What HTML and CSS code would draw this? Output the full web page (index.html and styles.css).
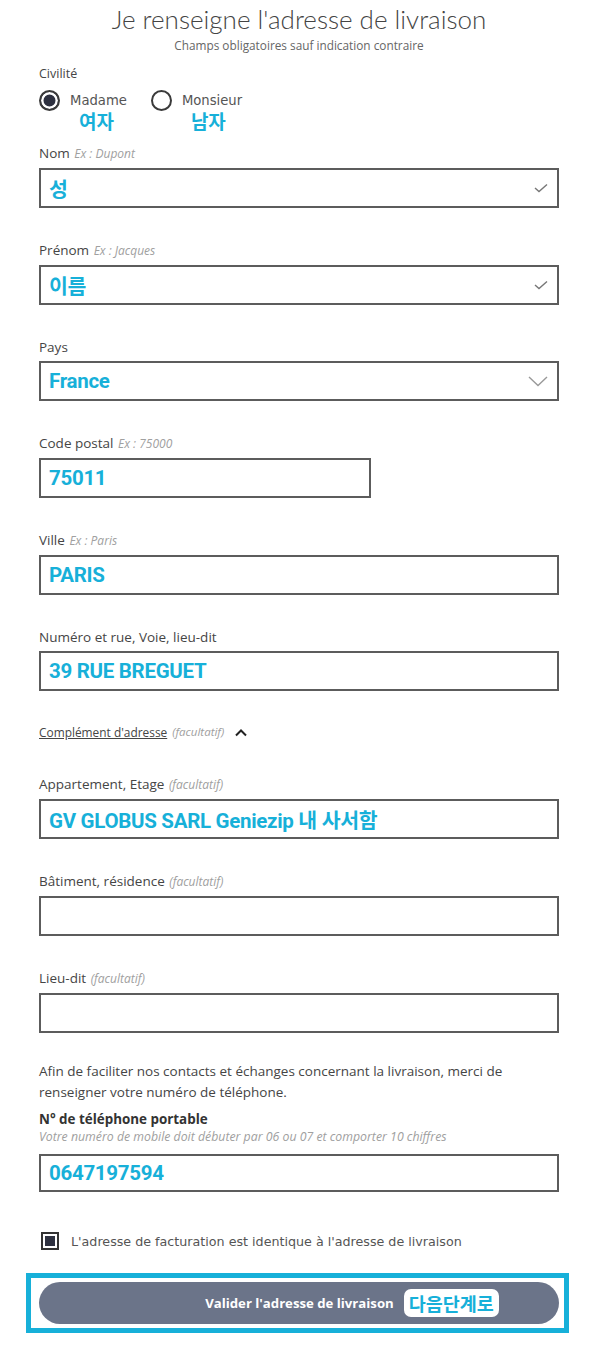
FILE: index.html
```html
<!DOCTYPE html>
<html lang="fr">
<head>
    <meta charset="UTF-8">
    <meta name="viewport" content="width=device-width, initial-scale=1.0">
    <title>Adresse de livraison</title>
    <link rel="stylesheet" href="styles.css">
</head>
<body>
    <main class="form-page">
        <header class="form-header">
            <h1>Je renseigne l'adresse de livraison</h1>
            <p class="subtitle">Champs obligatoires sauf indication contraire</p>
        </header>

        <div class="civility">
            <div class="civility-title">Civilité</div>
            <div class="radio-row">
                <div class="radio-item">
                    <span class="radio checked"></span>
                    <span class="radio-label">Madame</span>
                    <span class="note">여자</span>
                </div>
                <div class="radio-item">
                    <span class="radio"></span>
                    <span class="radio-label">Monsieur</span>
                    <span class="note">남자</span>
                </div>
            </div>
        </div>

        <div class="field">
            <label class="field-label">Nom <em>Ex : Dupont</em></label>
            <div class="input">
                <span class="value">성</span>
                <svg class="icon-check" width="14" height="10" viewBox="0 0 14 10"><path d="M1 5 L5 8.5 L13 1.5" fill="none" stroke="#777" stroke-width="1.4"/></svg>
            </div>
        </div>

        <div class="field">
            <label class="field-label">Prénom <em>Ex : Jacques</em></label>
            <div class="input">
                <span class="value">이름</span>
                <svg class="icon-check" width="14" height="10" viewBox="0 0 14 10"><path d="M1 5 L5 8.5 L13 1.5" fill="none" stroke="#777" stroke-width="1.4"/></svg>
            </div>
        </div>

        <div class="field">
            <label class="field-label">Pays</label>
            <div class="input">
                <span class="value">France</span>
                <svg class="icon-chevron" width="20" height="11" viewBox="0 0 20 11"><path d="M1 1 L10 9.5 L19 1" fill="none" stroke="#999" stroke-width="1.4"/></svg>
            </div>
        </div>

        <div class="field">
            <label class="field-label">Code postal <em>Ex : 75000</em></label>
            <div class="input input-short">
                <span class="value">75011</span>
            </div>
        </div>

        <div class="field">
            <label class="field-label">Ville <em>Ex : Paris</em></label>
            <div class="input">
                <span class="value">PARIS</span>
            </div>
        </div>

        <div class="field">
            <label class="field-label">Numéro et rue, Voie, lieu-dit</label>
            <div class="input">
                <span class="value">39 RUE BREGUET</span>
            </div>
        </div>

        <div class="complement">
            <span class="complement-link">Complément d'adresse</span>
            <em>(facultatif)</em>
            <svg class="icon-caret" width="14" height="9" viewBox="0 0 14 9"><path d="M2 7.5 L7 2.5 L12 7.5" fill="none" stroke="#222" stroke-width="2"/></svg>
        </div>

        <div class="field field-first">
            <label class="field-label">Appartement, Etage <em>(facultatif)</em></label>
            <div class="input">
                <span class="value">GV GLOBUS SARL Geniezip 내 사서함</span>
            </div>
        </div>

        <div class="field">
            <label class="field-label">Bâtiment, résidence <em>(facultatif)</em></label>
            <div class="input"></div>
        </div>

        <div class="field">
            <label class="field-label">Lieu-dit <em>(facultatif)</em></label>
            <div class="input"></div>
        </div>

        <div class="phone">
            <p class="phone-info">Afin de faciliter nos contacts et échanges concernant la livraison, merci de renseigner votre numéro de téléphone.</p>
            <div class="phone-title">N° de téléphone portable</div>
            <div class="phone-hint">Votre numéro de mobile doit débuter par 06 ou 07 et comporter 10 chiffres</div>
            <div class="input">
                <span class="value">0647197594</span>
            </div>
        </div>

        <div class="checkbox-row">
            <span class="checkbox"></span>
            <span class="checkbox-label">L'adresse de facturation est identique à l'adresse de livraison</span>
        </div>

        <div class="submit-frame">
            <button class="submit">Valider l'adresse de livraison <span class="badge">다음단계로</span></button>
        </div>
    </main>
</body>
</html>
```

FILE: styles.css
```css
:root {
    --cyan: #17b0d9;
    --border: #5c5c5c;
    --label: #454545;
    --hint: #a0a0a0;
    --dark: #2e3140;
    --button: #6b7489;
}

body {
    margin: 0;
    background-color: #ffffff;
    font-family: 'Open Sans', 'Noto Sans CJK KR', sans-serif;
    color: var(--label);
}

.form-page {
    width: 520px;
    padding: 4px 31px 20px 39px;
}

.form-header {
    text-align: center;
}

.form-header h1 {
    margin: 0;
    font-family: 'Lato', sans-serif;
    font-weight: 300;
    font-size: 26px;
    line-height: 30px;
    color: #444;
}

.subtitle {
    margin: 3px 0 0;
    font-size: 11.8px;
    line-height: 16px;
    color: #666;
}

.civility {
    margin-top: 11px;
}

.civility-title {
    font-size: 12.5px;
    line-height: 20px;
}

.radio-row {
    display: flex;
    gap: 24px;
    margin-top: 6px;
}

.radio-item {
    position: relative;
    display: flex;
    align-items: center;
    gap: 10px;
    padding-bottom: 26px;
}

.radio {
    width: 17px;
    height: 17px;
    border: 2px solid #3a3a3a;
    border-radius: 50%;
    box-sizing: content-box;
}

.radio.checked {
    background-color: var(--dark);
    box-shadow: inset 0 0 0 2.5px #ffffff;
}

.radio-label {
    font-family: 'DejaVu Sans', sans-serif;
    font-size: 13.2px;
    color: #555;
}

.note {
    position: absolute;
    left: 40px;
    top: 19px;
    font-family: 'Noto Sans CJK KR', sans-serif;
    font-weight: 700;
    font-size: 19px;
    line-height: 24px;
    color: var(--cyan);
}

.field {
    margin-top: 32px;
}

.civility + .field {
    margin-top: 6px;
}

.field-label {
    display: block;
    font-size: 13.5px;
    line-height: 20px;
}

.field-label em,
.complement em {
    font-size: 12px;
    color: var(--hint);
    margin-left: 1px;
}

.input {
    display: flex;
    align-items: center;
    justify-content: space-between;
    height: 36px;
    margin-top: 4px;
    padding: 0 9px 0 8px;
    border: 2px solid var(--border);
}

.input-short {
    width: 311px;
}

.value {
    font-family: 'Roboto', 'Noto Sans CJK KR', sans-serif;
    font-weight: 700;
    font-size: 20.5px;
    color: var(--cyan);
    letter-spacing: -0.3px;
}

.complement {
    display: flex;
    align-items: center;
    gap: 4px;
    margin-top: 31px;
    line-height: 20px;
}

.complement-link {
    font-size: 11.9px;
    text-decoration: underline;
}

.complement em {
    font-size: 11.5px;
}

.icon-caret {
    margin-left: 6px;
}

.field-first {
    margin-top: 32px;
}

.phone {
    margin-top: 28px;
}

.phone-info {
    margin: 0;
    font-size: 13.5px;
    line-height: 21px;
}

.phone-title {
    margin-top: 6px;
    font-size: 13.4px;
    font-weight: 700;
    line-height: 20px;
    color: #333;
}

.phone-hint {
    font-size: 12.3px;
    font-style: italic;
    line-height: 16px;
    color: var(--hint);
}

.phone .input {
    height: 34px;
    margin-top: 9px;
}

.checkbox-row {
    display: flex;
    align-items: center;
    gap: 12px;
    margin-top: 40px;
    padding-left: 2px;
}

.checkbox {
    width: 10px;
    height: 10px;
    border: 2px solid #333;
    padding: 2px;
    background-color: var(--dark);
    background-clip: content-box;
}

.checkbox-label {
    font-family: 'DejaVu Sans', sans-serif;
    font-size: 12.7px;
    color: #555;
}

.submit-frame {
    margin: 23px -10px 0 -13px;
    padding: 4px 5px 4px 8px;
    border: 5px solid var(--cyan);
}

.submit {
    display: flex;
    align-items: center;
    justify-content: center;
    gap: 10px;
    width: 100%;
    height: 42px;
    padding: 0 0 0 106px;
    border: none;
    border-radius: 21px;
    background-color: var(--button);
    font-family: 'Open Sans', sans-serif;
    font-weight: 700;
    font-size: 13.2px;
    color: #ffffff;
}

.badge {
    padding: 0 5px;
    border-radius: 7px;
    background-color: #ffffff;
    font-family: 'Noto Sans CJK KR', sans-serif;
    font-weight: 700;
    font-size: 18.5px;
    line-height: 28px;
    color: var(--cyan);
}
```
